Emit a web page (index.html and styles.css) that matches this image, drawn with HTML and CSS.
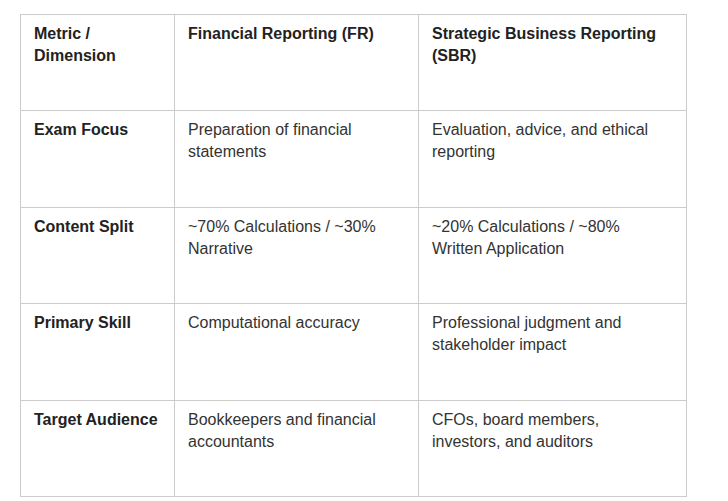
FILE: index.html
```html
<!DOCTYPE html>
<html>
<head>
<meta charset="utf-8">
<link rel="stylesheet" href="styles.css">
</head>
<body>
<table class="cmp">
  <colgroup>
    <col class="c1">
    <col class="c2">
    <col class="c3">
  </colgroup>
  <tr class="row">
    <th>Metric / Dimension</th>
    <th>Financial Reporting (FR)</th>
    <th class="last">Strategic Business Reporting (SBR)</th>
  </tr>
  <tr class="row">
    <th>Exam Focus</th>
    <td>Preparation of financial statements</td>
    <td class="last">Evaluation, advice, and ethical reporting</td>
  </tr>
  <tr class="row">
    <th>Content Split</th>
    <td>~70% Calculations / ~30% Narrative</td>
    <td class="last">~20% Calculations / ~80% Written Application</td>
  </tr>
  <tr class="row">
    <th>Primary Skill</th>
    <td>Computational accuracy</td>
    <td class="last">Professional judgment and stakeholder impact</td>
  </tr>
  <tr class="row">
    <th>Target Audience</th>
    <td>Bookkeepers and financial accountants</td>
    <td class="last">CFOs, board members, investors, and auditors</td>
  </tr>
</table>
</body>
</html>
```
FILE: styles.css
```css
html, body {
  margin: 0;
  padding: 0;
  background: #ffffff;
}
body {
  padding: 14px 0 0 20px;
  font-family: "Liberation Sans", Arial, sans-serif;
  font-size: 16px;
  line-height: 22px;
  color: #333333;
}
.cmp {
  border-collapse: collapse;
  table-layout: fixed;
  width: 666px;
}
.c1 { width: 154px; }
.c2 { width: 244px; }
.c3 { width: 268px; }
.cmp th,
.cmp td {
  border: 1px solid #cccccc;
  vertical-align: top;
  text-align: left;
  padding: 8px 13px;
}
.cmp .last {
  padding-right: 22px;
}
.cmp th {
  font-weight: bold;
  color: #222222;
}
.row {
  height: 96.4px;
}
```
